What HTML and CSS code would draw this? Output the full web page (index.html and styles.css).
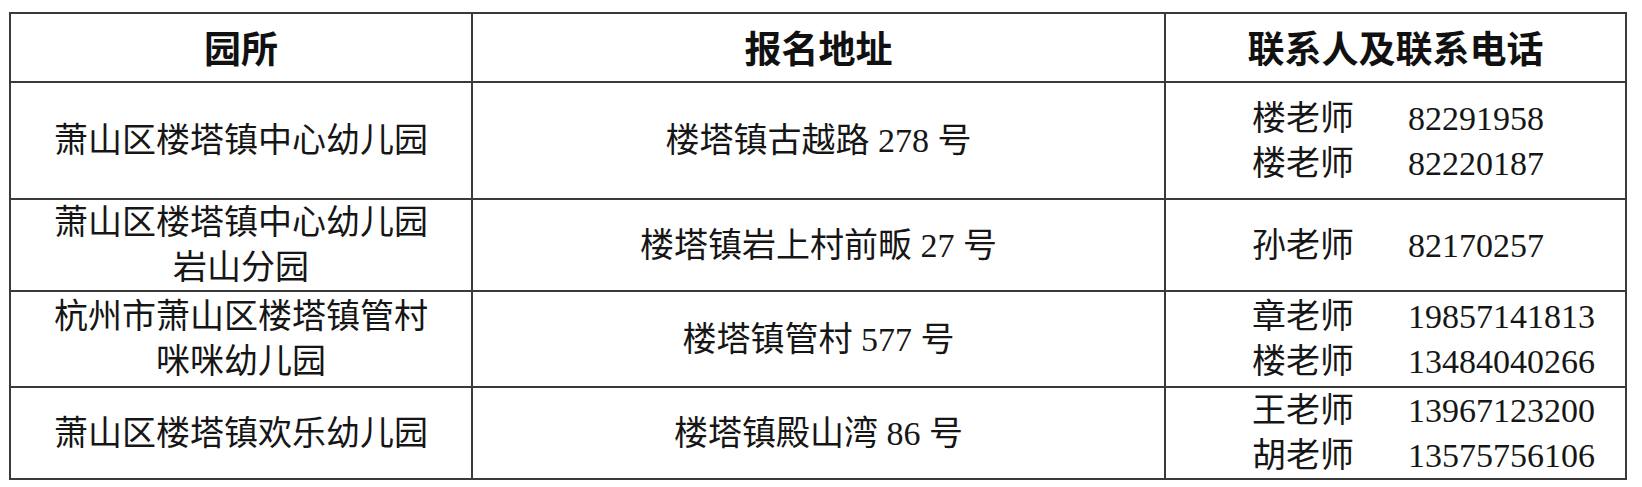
FILE: index.html
```html
<!DOCTYPE html>
<html lang="zh-CN">
<head>
<meta charset="utf-8">
<title>园所报名信息</title>
<link rel="stylesheet" href="styles.css">
</head>
<body>
<table class="info-table">
  <colgroup>
    <col class="col-name">
    <col class="col-addr">
    <col class="col-contact">
  </colgroup>
  <thead>
    <tr class="row-head">
      <th>园所</th>
      <th>报名地址</th>
      <th>联系人及联系电话</th>
    </tr>
  </thead>
  <tbody>
    <tr class="row-1">
      <td class="center">萧山区楼塔镇中心幼儿园</td>
      <td class="center">楼塔镇古越路 278 号</td>
      <td>
        <div class="contacts">
          <span>楼老师</span><span class="num">82291958</span>
          <span>楼老师</span><span class="num">82220187</span>
        </div>
      </td>
    </tr>
    <tr class="row-2">
      <td class="center">萧山区楼塔镇中心幼儿园<br>岩山分园</td>
      <td class="center">楼塔镇岩上村前畈 27 号</td>
      <td>
        <div class="contacts">
          <span>孙老师</span><span class="num">82170257</span>
        </div>
      </td>
    </tr>
    <tr class="row-3">
      <td class="center">杭州市萧山区楼塔镇管村<br>咪咪幼儿园</td>
      <td class="center">楼塔镇管村 577 号</td>
      <td>
        <div class="contacts">
          <span>章老师</span><span class="num">19857141813</span>
          <span>楼老师</span><span class="num">13484040266</span>
        </div>
      </td>
    </tr>
    <tr class="row-4">
      <td class="center">萧山区楼塔镇欢乐幼儿园</td>
      <td class="center">楼塔镇殿山湾 86 号</td>
      <td>
        <div class="contacts">
          <span>王老师</span><span class="num">13967123200</span>
          <span>胡老师</span><span class="num">13575756106</span>
        </div>
      </td>
    </tr>
  </tbody>
</table>
</body>
</html>
```

FILE: styles.css
```css
html, body {
  margin: 0;
  padding: 0;
  background: #ffffff;
}

body {
  padding: 12px 0 0 9px;
  font-family: "Liberation Serif", "Noto Sans CJK SC", serif;
  color: #161616;
}

.info-table {
  border-collapse: separate;
  border-spacing: 0;
  table-layout: fixed;
  width: 1616px;
  border-left: 2px solid #3a3a3a;
  border-top: 2px solid #3a3a3a;
}

.col-name { width: 462px; }
.col-addr { width: 693px; }
.col-contact { width: 461px; }

.info-table th,
.info-table td {
  border-right: 2px solid #3a3a3a;
  border-bottom: 2px solid #3a3a3a;
  padding: 0;
  vertical-align: middle;
}

.info-table th {
  font-family: "Noto Sans CJK SC", sans-serif;
  font-weight: 700;
  font-size: 37px;
  line-height: 45px;
  text-align: center;
  color: #111;
}

.info-table td {
  font-size: 34px;
  line-height: 45px;
  font-weight: 400;
}

.info-table td.center {
  text-align: center;
}

.row-head { height: 69px; }
.row-1 { height: 117px; }
.row-2 { height: 91px; }
.row-3 { height: 96px; }
.row-4 { height: 92px; }

.contacts {
  display: grid;
  grid-template-columns: 102px auto;
  column-gap: 54px;
  justify-content: start;
  padding-left: 86px;
}

.contacts .num {
  font-family: "Liberation Serif", serif;
}
```
